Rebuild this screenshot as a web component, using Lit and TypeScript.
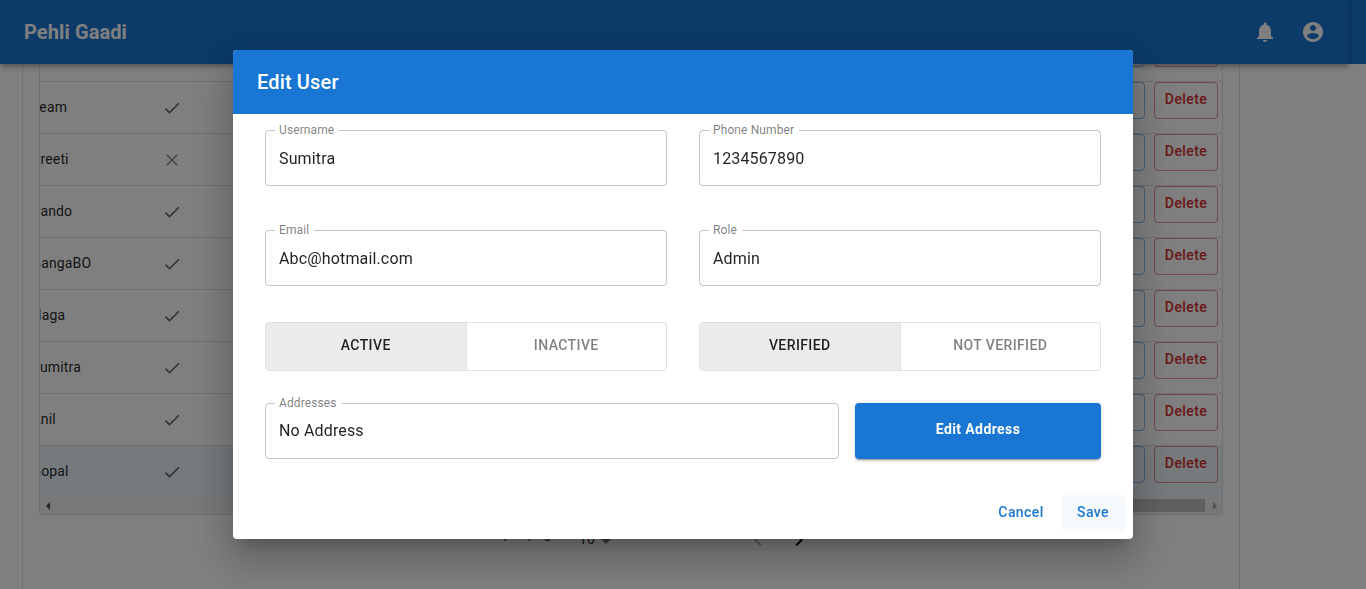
import { LitElement, html, css, svg } from 'lit';
import { customElement } from 'lit/decorators.js';

const ICONS = {
  bell: 'M12 22c1.1 0 2-.9 2-2h-4c0 1.1.89 2 2 2zm6-6v-5c0-3.07-1.64-5.64-4.5-6.32V4c0-.83-.67-1.5-1.5-1.5s-1.5.67-1.5 1.5v.68C7.63 5.36 6 7.92 6 11v5l-2 2v1h16v-1l-2-2z',
  account: 'M12 2C6.48 2 2 6.48 2 12s4.48 10 10 10 10-4.48 10-10S17.52 2 12 2zm0 3c1.66 0 3 1.34 3 3s-1.34 3-3 3-3-1.34-3-3 1.34-3 3-3zm0 14.2c-2.5 0-4.71-1.28-6-3.22.03-1.99 4-3.08 6-3.08 1.99 0 5.97 1.09 6 3.08-1.29 1.94-3.5 3.22-6 3.22z',
  check: 'M9 16.17L4.83 12l-1.42 1.41L9 19 21 7l-1.41-1.41z',
  close: 'M19 6.41L17.59 5 12 10.59 6.41 5 5 6.41 10.59 12 5 17.59 6.41 19 12 13.41 17.59 19 19 17.59 13.41 12z',
  left: 'M15.41 16.59 10.83 12l4.58-4.59L14 6l-6 6 6 6z',
  right: 'M8.59 16.59 13.17 12 8.59 7.41 10 6l6 6-6 6z',
};

const icon = (name: keyof typeof ICONS, size = 24) => html`
  <svg width=${size} height=${size} viewBox="0 0 24 24" fill="currentColor">${svg`<path d=${ICONS[name]}></path>`}</svg>
`;

const USERS = [
  { name: '', verified: true, hidden: true },
  { name: 'Team', verified: true },
  { name: 'Preeti', verified: false },
  { name: 'Pando', verified: true },
  { name: 'GangaBO', verified: true },
  { name: 'Naga', verified: true },
  { name: 'Sumitra', verified: true },
  { name: 'Anil', verified: true },
  { name: 'Gopal', verified: true, selected: true },
];

@customElement('app-root')
export class AppRoot extends LitElement {
  static styles = css`
    :host {
      display: block;
      height: 589px;
      overflow: hidden;
      background: #fff;
      font-family: Roboto, 'Liberation Sans', sans-serif;
      color: rgba(0, 0, 0, 0.87);
    }

    /* app bar, stays over the scrolled page */
    .bar {
      position: fixed;
      top: 0;
      left: 0;
      right: 0;
      height: 64px;
      background: #1976d2;
      z-index: 2;
    }

    .bar-inner {
      width: 1349px;
      height: 64px;
      box-sizing: border-box;
      padding: 0 24px;
      display: flex;
      align-items: center;
      gap: 24px;
      color: #fff;
      box-shadow: 0 2px 4px -1px rgba(0, 0, 0, 0.2), 0 4px 5px 0 rgba(0, 0, 0, 0.14), 0 1px 10px 0 rgba(0, 0, 0, 0.12);
    }

    .brand {
      font-size: 20px;
      font-weight: 700;
      letter-spacing: 0.1px;
      margin-right: auto;
    }

    .bar-inner svg {
      display: block;
    }

    /* page behind the dialog */
    .card {
      box-sizing: border-box;
      width: 1218px;
      height: 640px;
      margin-left: 22px;
      padding: 30px 16px 0;
      border: 1px solid rgba(0, 0, 0, 0.12);
      border-top: 0;
    }

    .table {
      box-sizing: border-box;
      border: 1px solid #e0e0e0;
      border-top: 0;
      border-radius: 4px;
      overflow: hidden;
    }

    .row {
      display: grid;
      grid-template-columns: 122px 20px 1fr;
      height: 51px;
      border-bottom: 1px solid #e0e0e0;
      font-size: 14px;
      letter-spacing: 0.01071em;
    }

    .row.selected {
      background: #edf4fb;
      border-bottom: 0;
    }

    .name {
      margin-left: -8.5px;
      width: 130px;
      line-height: 50px;
      white-space: nowrap;
    }

    .status {
      display: flex;
      align-items: center;
      height: 52px;
      color: rgba(0, 0, 0, 0.6);
    }

    .status.off {
      color: rgba(0, 0, 0, 0.42);
    }

    .actions {
      display: flex;
      justify-content: flex-end;
      gap: 9px;
      padding-right: 4px;
    }

    .btn {
      box-sizing: border-box;
      height: 37px;
      padding-bottom: 4px;
      border-radius: 4px;
      border: 1px solid;
      font-size: 14px;
      font-weight: 500;
      letter-spacing: 0.02857em;
      display: flex;
      align-items: center;
      justify-content: center;
    }

    .btn.edit {
      width: 60px;
      color: #1976d2;
      border-color: rgba(25, 118, 210, 0.5);
    }

    .btn.delete {
      width: 64px;
      color: #d32f2f;
      border-color: rgba(211, 47, 47, 0.5);
    }

    .scrollbar {
      display: flex;
      justify-content: space-between;
      height: 17px;
      background: #f1f1f1;
    }

    .arrow {
      width: 17px;
      display: flex;
      align-items: center;
      justify-content: center;
    }

    .arrow i {
      border: 4px solid transparent;
    }

    .arrow.back i {
      border-left-width: 0;
      border-right-color: #505050;
      margin-right: 2px;
    }

    .arrow.next i {
      border-right-width: 0;
      border-left-color: #a3a3a3;
      margin-left: 2px;
    }

    .thumb {
      width: 900px;
      margin: 2px 0;
      margin-left: auto;
      background: #c1c1c1;
    }

    .pagination {
      display: flex;
      align-items: center;
      height: 50px;
      padding-left: 426px;
      font-size: 14px;
      letter-spacing: 0.01071em;
    }

    .rows-per-page {
      width: 114px;
      margin-top: -14px;
    }

    .rows-value {
      width: 22px;
      margin-top: -2px;
    }

    .caret {
      width: 0;
      margin-top: 3px;
      border: 5px solid transparent;
      border-top-color: rgba(0, 0, 0, 0.54);
      border-bottom-width: 0;
    }

    .pager {
      display: flex;
      width: 40px;
      justify-content: center;
    }

    .pager.first {
      margin-left: 127px;
      color: rgba(0, 0, 0, 0.26);
    }

    .pager.next {
      margin-left: 1px;
      color: #000;
    }

    /* dialog */
    .backdrop {
      position: fixed;
      inset: 0;
      background: rgba(0, 0, 0, 0.5);
      display: flex;
      align-items: center;
      justify-content: center;
      z-index: 3;
    }

    .dialog {
      width: 900px;
      background: #fff;
      border-radius: 4px;
      overflow: hidden;
      box-shadow: 0 11px 15px -7px rgba(0, 0, 0, 0.2), 0 24px 38px 3px rgba(0, 0, 0, 0.14), 0 9px 46px 8px rgba(0, 0, 0, 0.12);
    }

    .dialog-title {
      height: 64px;
      box-sizing: border-box;
      padding: 0 24px;
      background: #1976d2;
      color: #fff;
      font-size: 20px;
      font-weight: 500;
      letter-spacing: 0.0075em;
      line-height: 64px;
    }

    .content {
      padding: 16px 32px 28px;
      display: flex;
      flex-direction: column;
    }

    .line {
      display: grid;
      grid-template-columns: 402px 402px;
      column-gap: 32px;
    }

    .line.fields {
      margin-bottom: 44px;
    }

    .line.fields.last {
      margin-bottom: 36px;
    }

    .line.toggles {
      margin-bottom: 32px;
    }

    .line.address {
      grid-template-columns: 574px 246px;
      column-gap: 16px;
    }

    .field {
      position: relative;
      box-sizing: border-box;
      height: 56px;
      padding: 0 13px;
      border: 1px solid rgba(0, 0, 0, 0.23);
      border-radius: 4px;
      display: flex;
      align-items: center;
      font-size: 16px;
      letter-spacing: 0.00938em;
    }

    .line.address .field {
      padding-bottom: 2px;
    }

    .field label {
      position: absolute;
      top: -9px;
      left: 9px;
      padding: 0 5px 0 4px;
      background: #fff;
      font-size: 12px;
      line-height: 16px;
      letter-spacing: 0.00938em;
      color: rgba(0, 0, 0, 0.52);
    }

    .toggle {
      display: flex;
      height: 49px;
      box-sizing: border-box;
      border: 1px solid rgba(0, 0, 0, 0.12);
      border-radius: 4px;
      overflow: hidden;
      font-size: 14px;
      font-weight: 500;
      letter-spacing: 0.02857em;
      text-transform: uppercase;
    }

    .toggle span {
      flex: 1;
      display: flex;
      align-items: center;
      justify-content: center;
      padding-bottom: 4px;
      color: rgba(0, 0, 0, 0.5);
    }

    .toggle span + span {
      border-left: 1px solid rgba(0, 0, 0, 0.12);
    }

    .toggle span.on {
      background: rgba(0, 0, 0, 0.08);
      color: rgba(0, 0, 0, 0.87);
    }

    .edit-address {
      display: flex;
      align-items: center;
      justify-content: center;
      box-sizing: border-box;
      height: 56px;
      padding-bottom: 4px;
      border-radius: 4px;
      background: #1976d2;
      color: #fff;
      font-size: 14px;
      font-weight: 700;
      letter-spacing: 0.02857em;
      box-shadow: 0 3px 1px -2px rgba(0, 0, 0, 0.2), 0 2px 2px 0 rgba(0, 0, 0, 0.14), 0 1px 5px 0 rgba(0, 0, 0, 0.12);
    }

    .dialog-actions {
      display: flex;
      justify-content: flex-end;
      gap: 8px;
      padding: 8px;
    }

    .text-btn {
      box-sizing: border-box;
      min-width: 64px;
      height: 36px;
      padding-bottom: 2px;
      display: flex;
      align-items: center;
      justify-content: center;
      border-radius: 4px;
      color: #1976d2;
      font-size: 14px;
      font-weight: 500;
      letter-spacing: 0.02857em;
    }

    .text-btn.hover {
      background: rgba(25, 118, 210, 0.04);
    }
  `;

  private renderField(label: string, value: string) {
    return html`
      <div class="field">
        <label>${label}</label>
        ${value}
      </div>
    `;
  }

  private renderToggle(on: string, off: string) {
    return html`
      <div class="toggle">
        <span class="on">${on}</span>
        <span>${off}</span>
      </div>
    `;
  }

  render() {
    return html`
      <header class="bar">
        <div class="bar-inner">
          <div class="brand">Pehli Gaadi</div>
          ${icon('bell')} ${icon('account')}
        </div>
      </header>

      <div class="card">
        <div class="table">
          ${USERS.map(
            (u) => html`
              <div class="row ${u.selected ? 'selected' : ''}">
                <div class="name">${u.name}</div>
                <div class="status ${u.verified ? '' : 'off'}">
                  ${u.hidden ? '' : icon(u.verified ? 'check' : 'close', 20)}
                </div>
                <div class="actions">
                  <div class="btn edit">Edit</div>
                  <div class="btn delete">Delete</div>
                </div>
              </div>
            `
          )}
          <div class="scrollbar">
            <div class="arrow back"><i></i></div>
            <div class="thumb"></div>
            <div class="arrow next"><i></i></div>
          </div>
        </div>
        <div class="pagination">
          <span class="rows-per-page">Rows per page:</span>
          <span class="rows-value">10</span>
          <span class="caret"></span>
          <span class="pager first">${icon('left')}</span>
          <span class="pager next">${icon('right')}</span>
        </div>
      </div>

      <div class="backdrop">
        <div class="dialog">
          <div class="dialog-title">Edit User</div>
          <div class="content">
            <div class="line fields">
              ${this.renderField('Username', 'Sumitra')} ${this.renderField('Phone Number', '1234567890')}
            </div>
            <div class="line fields last">
              ${this.renderField('Email', 'Abc@hotmail.com')} ${this.renderField('Role', 'Admin')}
            </div>
            <div class="line toggles">
              ${this.renderToggle('Active', 'Inactive')} ${this.renderToggle('Verified', 'Not Verified')}
            </div>
            <div class="line address">
              ${this.renderField('Addresses', 'No Address')}
              <div class="edit-address">Edit Address</div>
            </div>
          </div>
          <div class="dialog-actions">
            <div class="text-btn">Cancel</div>
            <div class="text-btn hover">Save</div>
          </div>
        </div>
      </div>
    `;
  }
}
